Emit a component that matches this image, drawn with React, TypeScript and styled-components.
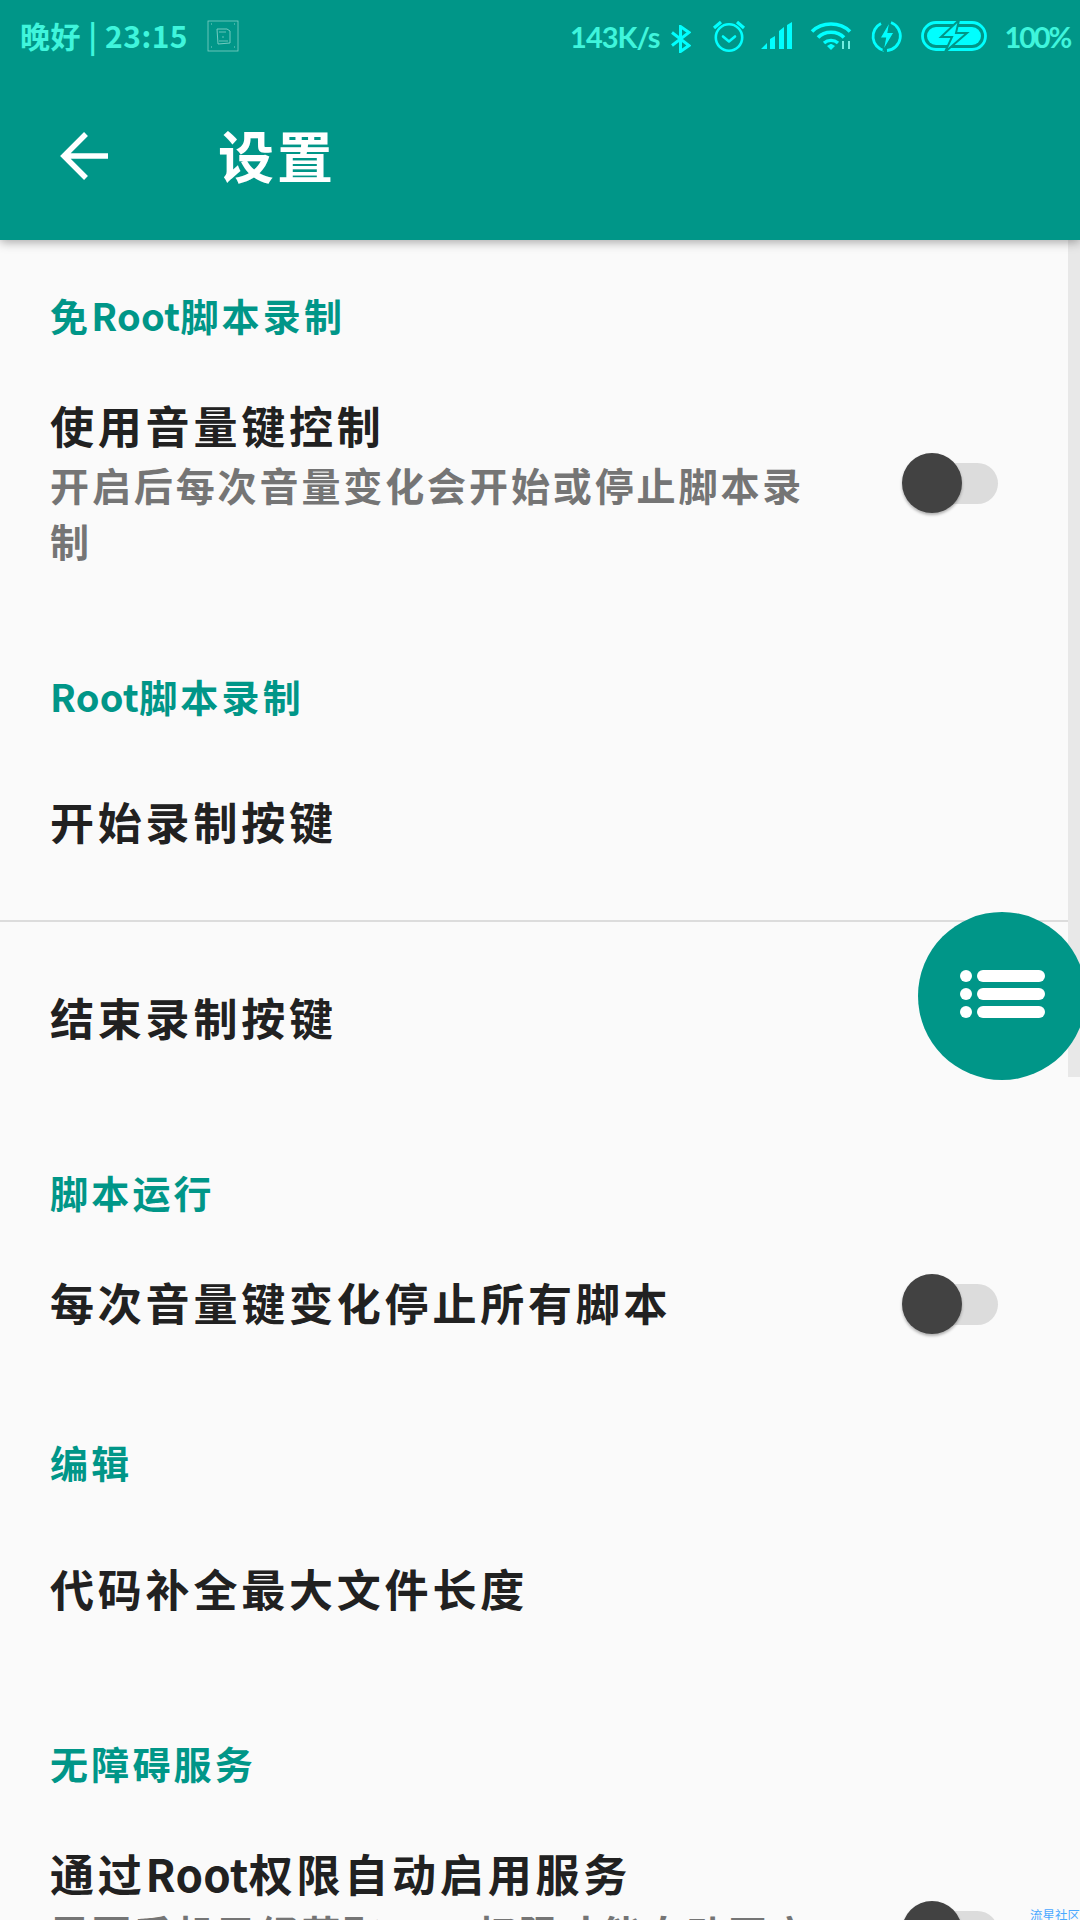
import React from "react";
import styled, {createGlobalStyle} from "styled-components";

const GlobalStyle = createGlobalStyle`
  html, body {
    margin: 0;
    padding: 0;
    background: #fafafa;
  }
  * {
    box-sizing: border-box;
  }
`

const CJK = `"Noto Sans CJK SC", "Noto Sans", sans-serif`
const TEAL = '#009688'
const CYAN = '#00ffff'

const SimIcon = () => (
    <svg width="32" height="32" viewBox="0 0 32 32" fill="none" stroke="#7fd0c6">
        <rect x="1" y="1" width="30" height="30" strokeWidth="0.8"/>
        <path d="M10 9h10l3 2v12l-12 1z" strokeWidth="0.9"/>
        <path d="M12 12h7M15 17h2M12 21h9" strokeWidth="0.8"/>
        <path d="M4 27h1M27 27h1M4 4h1M27 4h1" strokeWidth="1.2"/>
    </svg>
)

const BluetoothIcon = () => (
    <svg width="20" height="28" viewBox="0 0 20 28" fill="none" stroke={CYAN} strokeWidth="3">
        <path d="M1 7.5L18 20.5L9.5 26.5V1.5L18 7.5L1 20.5"/>
    </svg>
)

const AlarmIcon = () => (
    <svg width="34" height="32" viewBox="0 0 34 32" fill="none" stroke={CYAN} strokeWidth="2.6">
        <circle cx="17" cy="17.5" r="13.2"/>
        <path d="M11 16.5l6 5 6-5" strokeLinecap="round" strokeLinejoin="round"/>
        <path d="M2 8l7-6M32 8l-7-6" strokeWidth="3.2"/>
    </svg>
)

const SignalIcon = () => (
    <svg width="31" height="28" viewBox="0 0 31 28" fill={CYAN}>
        <path d="M0 27L6 21V27zM9 17l5-3v13H9zM18 9l5-4v22h-5zM26 3l5-3v27h-5z"/>
    </svg>
)

const WifiIcon = () => (
    <svg width="42" height="28" viewBox="0 0 42 28" fill="none" stroke={CYAN}>
        <path d="M2 9.5C12 -0.5 30 -0.5 40 9.5" strokeWidth="3.6"/>
        <path d="M8 15.5C14.5 8.5 27.5 8.5 34 15.5" strokeWidth="3.6"/>
        <path d="M14 21C18 17.5 24 17.5 28 21" strokeWidth="3.4"/>
        <path d="M17 24L20.500 22H21.500L25 24L21 28z" fill={CYAN} stroke="none"/>
        <path d="M33 19v8M39 19v8" strokeWidth="1.8" stroke="#7ff5ea"/>
    </svg>
)

const FlashIcon = () => (
    <svg width="33" height="32" viewBox="0 0 33 32" fill="none" stroke={CYAN} strokeWidth="2.8">
        <path d="M11 3.500A14.500 14.500 0 0 0 14 30.500M21 2.500A14.500 14.500 0 0 1 17 30.500"/>
        <path d="M20 1L10 18H15.500L13 31L24 12.500H18z" fill={CYAN} stroke={TEAL} strokeWidth="1.200"/>
    </svg>
)

const BatteryIcon = () => (
    <svg width="66" height="30" viewBox="0 0 66 30" fill="none">
        <rect x="1.500" y="1.500" width="63" height="27" rx="13.500" stroke={CYAN} strokeWidth="2.800"/>
        <rect x="6" y="6" width="54" height="18" rx="9" fill={CYAN}/>
        <path d="M38 -1L20 16H31L24 31L46 12H35z" fill={CYAN} stroke={TEAL} strokeWidth="2"/>
    </svg>
)

const BackIcon = () => (
    <svg width="48" height="48" viewBox="0 0 48 48" fill="none" stroke="#fff" strokeWidth="5.500">
        <path d="M48 24H4M26 2L4 24L26 46"/>
    </svg>
)

const ListIcon = () => (
    <svg width="85" height="48" viewBox="0 0 85 48" fill="#fff">
        <rect x="0" y="0" width="12" height="12" rx="6"/>
        <rect x="17" y="0" width="68" height="12" rx="6"/>
        <rect x="0" y="18" width="12" height="12" rx="6"/>
        <rect x="17" y="18" width="68" height="12" rx="6"/>
        <rect x="0" y="36" width="12" height="12" rx="6"/>
        <rect x="17" y="36" width="68" height="12" rx="6"/>
    </svg>
)

type PrefProps = {
    title: React.ReactNode
    summary?: React.ReactNode
    toggle?: boolean
    height?: number
    divided?: boolean
}

const Pref = ({title, summary, toggle, height, divided}: PrefProps) => (
    <PrefRow $height={height} $divided={divided}>
        <PrefText>
            <PrefTitle>{title}</PrefTitle>
            {summary && <PrefSummary>{summary}</PrefSummary>}
        </PrefText>
        {toggle && <Switch><Knob/></Switch>}
    </PrefRow>
)

export default function App() {
    return (
        <Screen>
            <GlobalStyle/>
            <Header>
                <StatusBar>
                    <StatusText>晚好 | 23:15</StatusText>
                    <SimSlot><SimIcon/></SimSlot>
                    <StatusRight>
                        <Speed>143K/s</Speed>
                        <IconSlot $top={5}><BluetoothIcon/></IconSlot>
                        <IconSlot $left={3}><AlarmIcon/></IconSlot>
                        <SignalIcon/>
                        <WifiIcon/>
                        <FlashIcon/>
                        <BatteryIcon/>
                        <Percent>100%</Percent>
                    </StatusRight>
                </StatusBar>
                <Toolbar>
                    <BackIcon/>
                    <ToolbarTitle>设置</ToolbarTitle>
                </Toolbar>
            </Header>

            <Category $top={45}>免<Latin>Root</Latin>脚本录制</Category>
            <Pref title="使用音量键控制" summary="开启后每次音量变化会开始或停止脚本录制" toggle/>

            <Category $top={45}><Latin>Root</Latin>脚本录制</Category>
            <Pref title="开始录制按键" height={196} divided/>
            <Pref title="结束录制按键" height={194}/>

            <Category $top={46}>脚本运行</Category>
            <Pref title="每次音量键变化停止所有脚本" toggle/>

            <Category $top={46}>编辑</Category>
            <Pref title="代码补全最大文件长度" height={196}/>

            <Category $top={45}>无障碍服务</Category>
            <Pref title={<>通过<Latin>Root</Latin>权限自动启用服务</>}
                  summary={<>需要手机已经获取<Latin>Root</Latin>权限才能自动开启服务</>} toggle/>

            <Scrollbar/>
            <Fab><ListIcon/></Fab>
            <Watermark>流星社区</Watermark>
        </Screen>
    )
}

//styled-components
const Screen = styled.div`
  position: relative;
  width: 1080px;
  height: 1920px;
  overflow: hidden;
  background: #fafafa;
  font-family: ${CJK};
`
const Header = styled.header`
  position: relative;
  z-index: 2;
  height: 240px;
  background: ${TEAL};
  box-shadow: 0 2px 10px rgba(0, 0, 0, 0.35);
`
const StatusBar = styled.div`
  display: flex;
  align-items: center;
  height: 72px;
  padding: 0 10px 0 20px;
`
const StatusText = styled.span`
  margin-bottom: 3px;
  font-size: 30px;
  font-weight: 700;
  letter-spacing: 0.5px;
  color: #3ff5dc;
  white-space: nowrap;
`
const SimSlot = styled.span`
  display: flex;
  margin-left: 19px;
`
const StatusRight = styled.div`
  display: flex;
  align-items: center;
  margin-left: auto;
  gap: 18px;
`
const IconSlot = styled.span<{ $top?: number; $left?: number }>`
  display: flex;
  margin-top: ${props => props.$top || 0}px;
  margin-left: ${props => props.$left || 0}px;
  margin-right: ${props => -(props.$left || 0)}px;
`
const Speed = styled.span`
  margin-right: -7px;
  font-family: "Lato", sans-serif;
  font-size: 29px;
  font-weight: 700;
  letter-spacing: -1px;
  color: #3ff5dc;
`
const Percent = styled(Speed)`
  margin: 0;
  letter-spacing: -2.2px;
`
const Toolbar = styled.div`
  display: flex;
  align-items: center;
  height: 168px;
  padding-left: 60px;
`
const ToolbarTitle = styled.h1`
  margin: 0 0 5px 110px;
  font-size: 56px;
  font-weight: 700;
  letter-spacing: 3px;
  color: #fff;
`
const Latin = styled.span`
  letter-spacing: 0.3px;
`
const Category = styled.div<{ $top: number }>`
  height: 60px;
  margin-top: ${props => props.$top}px;
  padding-left: 50px;
  font-size: 38px;
  font-weight: 700;
  line-height: 60px;
  letter-spacing: 3.2px;
  color: ${TEAL};
`
const PrefRow = styled.div<{ $height?: number; $divided?: boolean }>`
  display: flex;
  align-items: center;
  justify-content: space-between;
  height: ${props => props.$height ? props.$height + 'px' : 'auto'};
  padding: ${props => props.$height ? '0' : '53px'} 82px ${props => props.$height ? '0' : '53px'} 50px;
  border-bottom: ${props => props.$divided ? '2px solid #dcdcdc' : 'none'};
`
const PrefText = styled.div`
  max-width: 770px;
`
const PrefTitle = styled.div`
  padding-bottom: 4px;
  font-size: 44px;
  font-weight: 700;
  line-height: 54px;
  letter-spacing: 3.8px;
  color: #212121;
`
const PrefSummary = styled.div`
  font-size: 39px;
  font-weight: 700;
  line-height: 56px;
  letter-spacing: 2.9px;
  color: #757575;
`
const Switch = styled.div`
  position: relative;
  flex-shrink: 0;
  width: 83px;
  height: 41px;
  border-radius: 21px;
  background: #dcdcdc;
`
const Knob = styled.div`
  position: absolute;
  left: -13px;
  top: -10px;
  width: 60px;
  height: 60px;
  border-radius: 50%;
  background: #424242;
  box-shadow: 0 2px 3px rgba(0, 0, 0, 0.3);
`
const Scrollbar = styled.div`
  position: absolute;
  top: 240px;
  right: 0;
  width: 12px;
  height: 837px;
  background: #e8e8e8;
`
const Fab = styled.div`
  position: absolute;
  left: 918px;
  top: 912px;
  display: flex;
  align-items: center;
  justify-content: center;
  width: 168px;
  height: 168px;
  padding-bottom: 5px;
  border-radius: 50%;
  background: ${TEAL};
`
const Watermark = styled.div`
  position: absolute;
  right: 0;
  bottom: -2px;
  font-size: 12.500px;
  line-height: 14px;
  color: #4aa8ff;
`
